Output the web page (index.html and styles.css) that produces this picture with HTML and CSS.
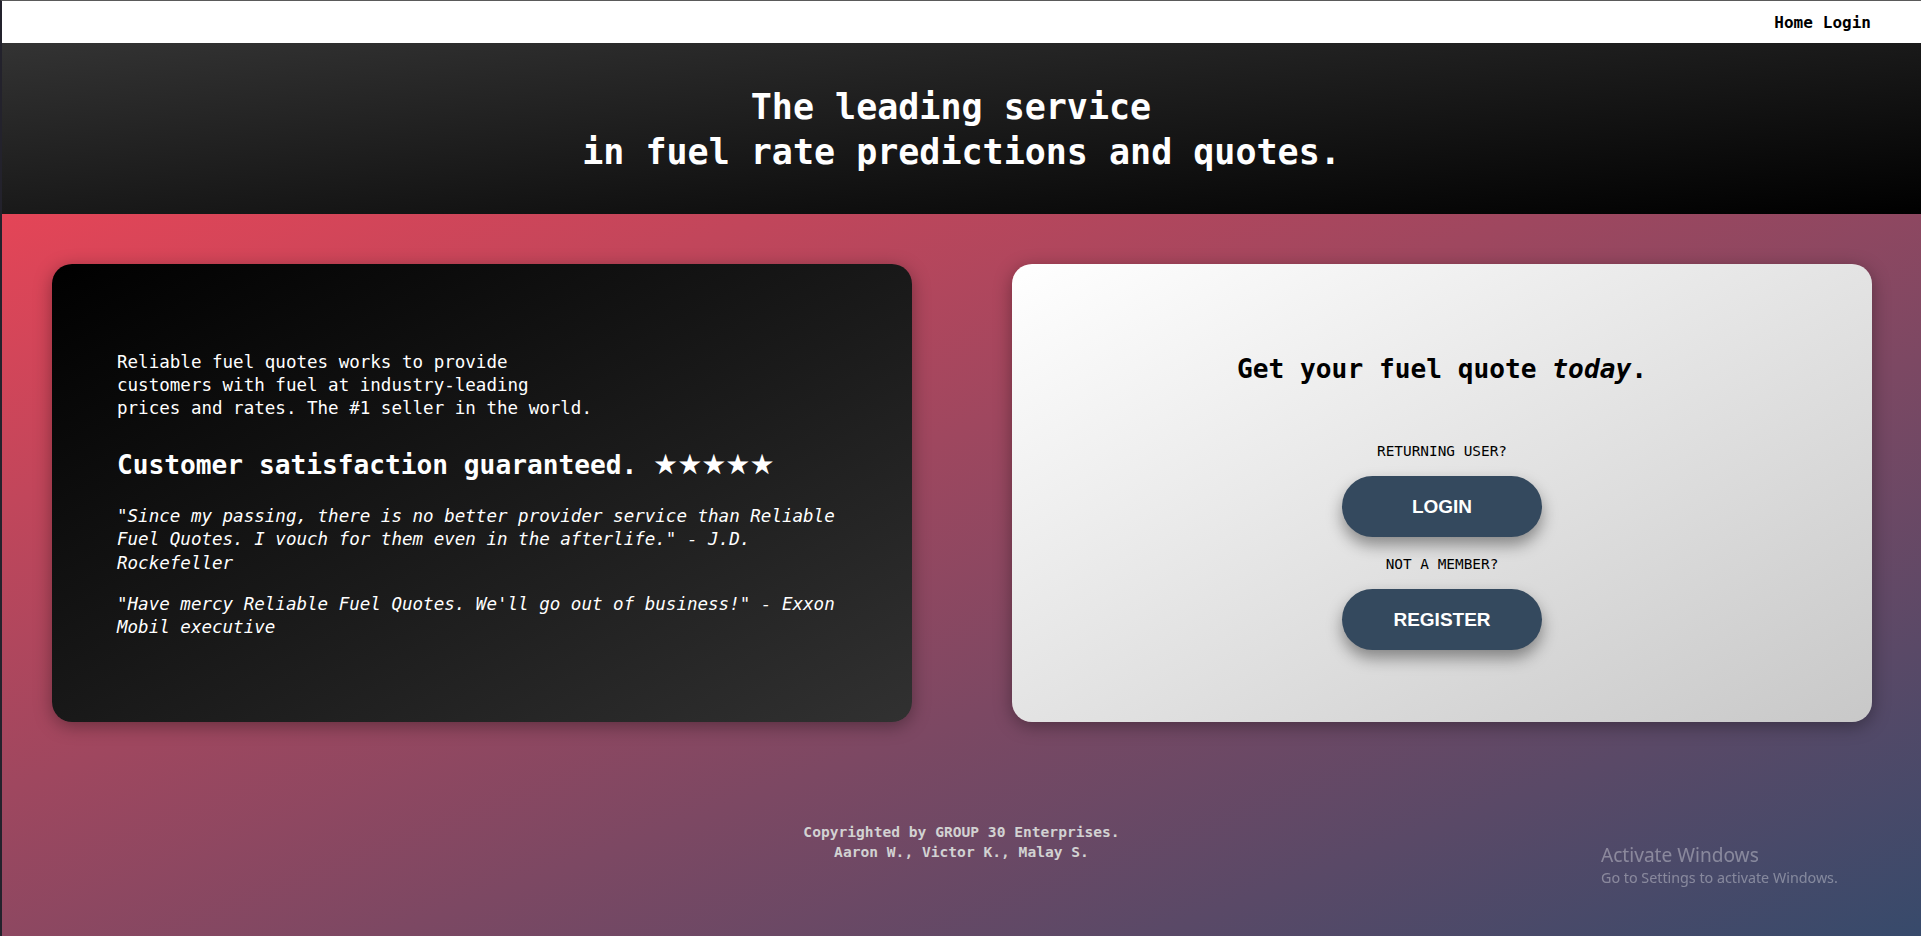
FILE: index.html
```html
<!DOCTYPE html>
<html lang="en">
<head>
<meta charset="utf-8">
<title>Reliable Fuel Quotes</title>
<link rel="stylesheet" href="styles.css">
</head>
<body>
<div class="page">
  <nav class="topnav">
    <a href="#">Home</a>
    <a href="#">Login</a>
  </nav>
  <header class="hero">
    <h1>The leading service&nbsp;<br>in fuel rate predictions and quotes.</h1>
  </header>
  <main class="main">
    <section class="cards">
      <div class="card card-dark">
        <p class="intro">Reliable fuel quotes works to provide<br>customers with fuel at industry-leading<br>prices and rates. The #1 seller in the world.</p>
        <h2 class="sat">Customer satisfaction guaranteed. <span class="stars">★★★★★</span></h2>
        <p class="quote">"Since my passing, there is no better provider service than Reliable Fuel Quotes. I vouch for them even in the afterlife." - J.D. Rockefeller</p>
        <p class="quote">"Have mercy Reliable Fuel Quotes. We'll go out of business!" - Exxon Mobil executive</p>
      </div>
      <div class="card card-light">
        <h2 class="cta">Get your fuel quote <em>today</em>.</h2>
        <p class="label label-first">RETURNING USER?</p>
        <a class="btn" href="#">LOGIN</a>
        <p class="label">NOT A MEMBER?</p>
        <a class="btn" href="#">REGISTER</a>
      </div>
    </section>
    <footer class="footer">
      <div>Copyrighted by GROUP 30 Enterprises.</div>
      <div>Aaron W., Victor K., Malay S.</div>
    </footer>
  </main>
</div>
<div class="watermark">
  <div class="wm-title">Activate Windows</div>
  <div class="wm-sub">Go to Settings to activate Windows.</div>
</div>
</body>
</html>
```
FILE: styles.css
```css
* { box-sizing: border-box; }
html, body { margin: 0; padding: 0; height: 100%; }
body {
  font-family: "DejaVu Sans Mono", "Liberation Mono", monospace;
  overflow: hidden;
}
.page {
  min-height: 100vh;
  display: flex;
  flex-direction: column;
  border-top: 1px solid #5a5a5a;
  border-left: 2px solid #23222c;
}
.topnav {
  height: 42px;
  background: #fff;
  display: flex;
  justify-content: flex-end;
  align-items: center;
  gap: 10px;
  padding-right: 50px;
}
.topnav a {
  color: #000;
  text-decoration: none;
  font-weight: bold;
  font-size: 16px;
}
.hero {
  height: 171px;
  background: linear-gradient(to bottom right, #333333, #000000);
  display: flex;
  align-items: center;
  justify-content: center;
  padding-top: 2px;
}
.hero h1 {
  margin: 0;
  color: #fff;
  font-size: 35px;
  line-height: 45px;
  text-align: center;
  font-weight: bold;
}
.main {
  flex: 1;
  background: linear-gradient(to bottom right, #e44557, #374a6b);
  padding-top: 50px;
}
.cards {
  display: grid;
  grid-template-columns: 860px 860px;
  column-gap: 100px;
  padding-left: 50px;
}
.card {
  height: 458px;
  border-radius: 20px;
  box-shadow: 0 4px 18px rgba(0, 0, 0, 0.35);
}
.card-dark {
  background: linear-gradient(to bottom right, #000000, #313131);
  color: #fff;
  display: flex;
  flex-direction: column;
  justify-content: center;
  padding: 4px 60px 0 65px;
}
.intro {
  margin: 0;
  font-size: 17.55px;
  line-height: 23.3px;
}
.sat {
  margin: 29.5px 0 25px;
  font-size: 26.2px;
  line-height: 30px;
}
.stars {
  font-family: "DejaVu Sans", sans-serif;
  font-size: 28px;
  letter-spacing: -1px;
}
.quote {
  margin: 0 0 18px;
  font-style: italic;
  font-size: 17.55px;
  line-height: 23.3px;
}
.quote:last-child { margin-bottom: 0; }
.card-light {
  background: linear-gradient(to bottom right, #ffffff, #c8c8c8);
  color: #000;
  display: flex;
  flex-direction: column;
  align-items: center;
  padding-top: 90px;
}
.cta {
  margin: 0;
  font-size: 26.2px;
  line-height: 30px;
}
.label {
  margin: 18.5px 0 0;
  font-size: 14.4px;
  line-height: 17px;
}
.label-first { margin-top: 58.5px; }
.btn {
  margin-top: 16.5px;
  width: 200px;
  height: 61px;
  border-radius: 31px;
  background: #34495e;
  color: #fff;
  text-decoration: none;
  font-family: "Liberation Sans", Arial, sans-serif;
  font-weight: bold;
  font-size: 19px;
  display: flex;
  align-items: center;
  justify-content: center;
  box-shadow: 0 8px 16px rgba(0, 0, 0, 0.4);
}
.footer {
  margin-top: 100px;
  text-align: center;
  color: #d2d2d2;
  font-weight: bold;
  font-size: 14.6px;
  line-height: 20px;
}
.watermark {
  position: fixed;
  left: 1601px;
  top: 843px;
  font-family: "Noto Sans", "Open Sans", sans-serif;
  color: rgba(255, 255, 255, 0.35);
}
.wm-title { font-size: 19.1px; line-height: 24px; }
.wm-sub { font-size: 14.3px; line-height: 22px; }
```
